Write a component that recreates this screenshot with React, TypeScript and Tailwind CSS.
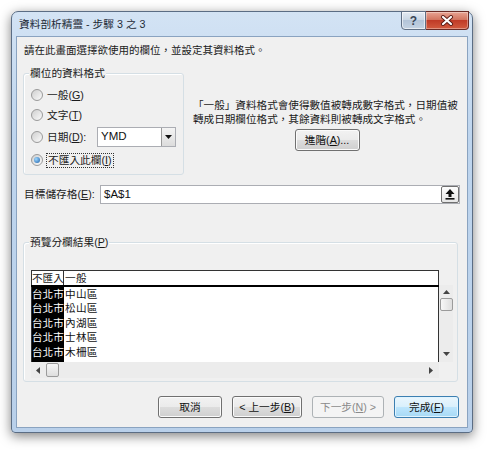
import React from "react";

const font = "font-['Liberation_Sans','Noto_Sans_CJK_TC',sans-serif]";

function Radio({ checked }: { checked?: boolean }) {
  return (
    <span className="w-[12px] h-[12px] rounded-full border border-[#9a9a9a] bg-[linear-gradient(135deg,#cfcfcf,#fbfbfb)] flex items-center justify-center shrink-0">
      {checked && (
        <span className="w-[6px] h-[6px] rounded-full bg-[radial-gradient(circle_at_35%_35%,#9fd8ff,#1c5fa8)]" />
      )}
    </span>
  );
}

function GroupBox({
  label,
  className,
  children,
}: {
  label: React.ReactNode;
  className: string;
  children: React.ReactNode;
}) {
  return (
    <div className={`relative rounded-[3px] border border-[#d5dfe5] shadow-[inset_1px_1px_0_#fff] ${className}`}>
      {/* legend sits over the frame line */}
      <span className="absolute -top-[8px] left-[5px] px-[1px] bg-[#f0f0f0] leading-[14px] text-[10.7px] text-[#1b1b1b]">
        {label}
      </span>
      {children}
    </div>
  );
}

function WinButton({
  children,
  w,
  kind = "normal",
}: {
  children: React.ReactNode;
  w: string;
  kind?: "normal" | "default" | "disabled";
}) {
  const look =
    kind === "disabled"
      ? "border-[#adb2b5] bg-[#f4f4f4] text-[#8a8a8a]"
      : kind === "default"
      ? "border-[#3c7fb1] bg-[linear-gradient(to_bottom,#eaf6fd_0%,#d9f0fc_50%,#bee6fd_50%,#a7d9f5_100%)] text-[#111] shadow-[inset_0_0_0_1px_#e0f4ff]"
      : "border-[#707070] bg-[linear-gradient(to_bottom,#f2f2f2_0%,#ebebeb_50%,#dddddd_50%,#cfcfcf_100%)] text-[#111] shadow-[inset_0_0_0_1px_#fbfbfb]";
  return (
    <div className={`${w} h-[22px] rounded-[3px] border flex items-center justify-center text-[10.7px] ${look}`}>
      {children}
    </div>
  );
}

const rows = ["中山區", "松山區", "內湖區", "士林區", "木柵區"];

export default function App() {
  return (
    <div className={`w-[491px] h-[451px] bg-white pt-[11px] pl-[11px] ${font}`}>
      {/* Aero window */}
      <div className="w-[462px] h-[422px] rounded-t-[7px] rounded-b-[4px] border border-[#5b6d84] bg-[linear-gradient(to_bottom,#d3e3f4,#bed5ee_30%,#b9d0ea)] shadow-[0_3px_12px_rgba(0,0,0,0.5)] flex flex-col">
        {/* Title bar */}
        <div className="h-[24px] flex justify-between">
          <div className="pl-[7px] flex items-center text-[10.7px] text-[#1e2a36]">
            資料剖析精靈 - 步驟 3 之 3
          </div>
          <div className="flex items-start pr-[3px] -mt-[1px]">
            <div className="w-[25px] h-[19px] rounded-bl-[4px] border border-[#5f6f84] bg-[linear-gradient(to_bottom,#e4ebf3,#c8d5e3_50%,#b3c4d8_50%,#c4d3e3)] flex items-center justify-center text-[12px] font-bold text-[#3a4656] shadow-[inset_0_0_0_1px_rgba(255,255,255,0.6)]">
              ?
            </div>
            <div className="w-[43px] h-[19px] rounded-br-[4px] border border-l-0 border-[#6a2a24] bg-[linear-gradient(to_bottom,#e8a493,#d0705a_50%,#c03b27_50%,#d25b3f)] flex items-center justify-center shadow-[inset_0_0_0_1px_rgba(255,255,255,0.35)]">
              <svg width="14" height="11" viewBox="0 0 14 11">
                <path d="M3 2 L11 9 M11 2 L3 9" stroke="#5a1c15" strokeWidth="4" strokeLinecap="round" />
                <path d="M3 2 L11 9 M11 2 L3 9" stroke="#fff" strokeWidth="2.2" strokeLinecap="round" />
              </svg>
            </div>
          </div>
        </div>

        {/* Client area */}
        <div className="mx-[4px] mb-[4px] h-[392px] border border-[#8aa3c0] bg-[#f0f0f0] flex flex-col text-[#1b1b1b]">
          <div className="pt-[6px] pl-[7px] leading-[14px] text-[10.5px]">
            請在此畫面選擇欲使用的欄位，並設定其資料格式。
          </div>

          {/* Format group + description */}
          <div className="mt-[16px] pl-[6px] flex">
            <GroupBox label="欄位的資料格式" className="w-[161px] h-[102px] pt-[11px] pl-[7px]">
              <div className="h-[20px] flex items-center gap-[4px] text-[10.7px]">
                <Radio />
                <span>一般(<u>G</u>)</span>
              </div>
              <div className="h-[20px] flex items-center gap-[4px] text-[10.7px]">
                <Radio />
                <span>文字(<u>T</u>)</span>
              </div>
              <div className="h-[24px] flex items-center text-[10.7px]">
                <Radio />
                <span className="ml-[4px] w-[50px]">日期(<u>D</u>):</span>
                <div className="w-[79px] h-[20px] border border-[#abadb3] bg-white flex items-center">
                  <span className="flex-1 pl-[3px] text-[11.5px] text-[#111]">YMD</span>
                  <div className="w-[14px] h-[18px] border-l border-[#9a9a9a] bg-[linear-gradient(to_bottom,#f4f4f4,#dcdcdc)] flex items-center justify-center">
                    <svg width="7" height="4" viewBox="0 0 7 4">
                      <path d="M0 0 H7 L3.5 4 Z" fill="#111" />
                    </svg>
                  </div>
                </div>
              </div>
              <div className="h-[22px] flex items-center gap-[3px] text-[10.7px]">
                <Radio checked />
                <span className="border border-dotted border-[#333] px-[1px] leading-[13px]">
                  不匯入此欄(<u>I</u>)
                </span>
              </div>
            </GroupBox>

            <div className="ml-[9px] w-[268px] pt-[25px] flex flex-col items-center">
              <div className="w-full leading-[14px] text-[10.6px]">
                「一般」資料格式會使得數值被轉成數字格式，日期值被
                <br />
                轉成日期欄位格式，其餘資料則被轉成文字格式。
              </div>
              <div className="mt-[3px]">
                <WinButton w="w-[65px]">
                  進階(<u>A</u>)...
                </WinButton>
              </div>
            </div>
          </div>

          {/* Destination */}
          <div className="mt-[10px] h-[19px] flex items-center">
            <span className="pl-[7px] w-[83px] text-[10.7px]">
              目標儲存格(<u>E</u>):
            </span>
            <div className="w-[360px] h-[19px] border border-[#abadb3] bg-white flex items-center justify-between">
              <span className="pl-[3px] text-[11.5px] text-[#111]">$A$1</span>
              <div className="w-[18px] h-[17px] rounded-[2px] border border-[#707070] bg-[linear-gradient(to_bottom,#fdfdfd,#e6e6e6)] flex items-center justify-center">
                <svg width="10" height="11" viewBox="0 0 10 11">
                  <path d="M5 0 L9.5 5 H6.5 V8 H3.5 V5 H0.5 Z" fill="#111" />
                  <rect x="0.5" y="9" width="9" height="1.6" fill="#111" />
                </svg>
              </div>
            </div>
          </div>

          {/* Preview */}
          <GroupBox
            label={<>預覽分欄結果(<u>P</u>)</>}
            className="mt-[38px] ml-[6px] w-[435px] h-[140px] pt-[27px] pl-[7px]"
          >
            <div className="flex text-[10.6px] leading-[14px]">
              <div className="w-[408px] flex flex-col">
                <div className="h-[15px] border-t border-x border-[#333] bg-white flex">
                  <span className="w-[32px] border-r border-[#333] whitespace-nowrap">不匯入</span>
                  <span className="pl-[1px] tracking-[0.3px]">一般</span>
                </div>
                <div className="h-[2px] bg-black" />
                <div className="h-[75px] border-x border-[#333] bg-white flex">
                  <div className="w-[32px] bg-black text-white whitespace-nowrap">
                    {rows.map((r) => (
                      <div key={r} className="h-[14.4px]">台北市</div>
                    ))}
                  </div>
                  <div className="pl-[1px] text-[#111] tracking-[0.3px]">
                    {rows.map((r) => (
                      <div key={r} className="h-[14.4px]">{r}</div>
                    ))}
                  </div>
                </div>
                <div className="h-[16px] bg-[#ececec] flex items-center pl-[5px] pr-[6px]">
                  <svg width="4" height="7" viewBox="0 0 4 7">
                    <path d="M4 0 V7 L0 3.5 Z" fill="#444" />
                  </svg>
                  <div className="ml-[6px] w-[13px] h-[14px] rounded-[2px] border border-[#9b9b9b] bg-[linear-gradient(to_bottom,#f7f7f7,#dedede)]" />
                  <div className="flex-1" />
                  <svg width="4" height="7" viewBox="0 0 4 7">
                    <path d="M0 0 V7 L4 3.5 Z" fill="#444" />
                  </svg>
                </div>
              </div>
              <div className="w-[14px] flex flex-col">
                <div className="h-[15px]" />
                <div className="h-[77px] bg-[#ececec] flex flex-col items-center pt-[5px] pb-[6px]">
                  <svg width="7" height="4" viewBox="0 0 7 4">
                    <path d="M0 4 H7 L3.5 0 Z" fill="#444" />
                  </svg>
                  <div className="mt-[4px] w-[13px] h-[13px] rounded-[2px] border border-[#9b9b9b] bg-[linear-gradient(to_right,#f7f7f7,#dedede)]" />
                  <div className="flex-1" />
                  <svg width="7" height="4" viewBox="0 0 7 4">
                    <path d="M0 0 H7 L3.5 4 Z" fill="#444" />
                  </svg>
                </div>
              </div>
            </div>
          </GroupBox>

          {/* Wizard buttons */}
          <div className="mt-[14px] pl-[141px] flex gap-[10px]">
            <WinButton w="w-[64px]">取消</WinButton>
            <WinButton w="w-[70px]">
              &lt; 上一步(<u>B</u>)
            </WinButton>
            <WinButton w="w-[72px]" kind="disabled">
              下一步(<u>N</u>) &gt;
            </WinButton>
            <WinButton w="w-[65px]" kind="default">
              完成(<u>F</u>)
            </WinButton>
          </div>
        </div>
      </div>
    </div>
  );
}
